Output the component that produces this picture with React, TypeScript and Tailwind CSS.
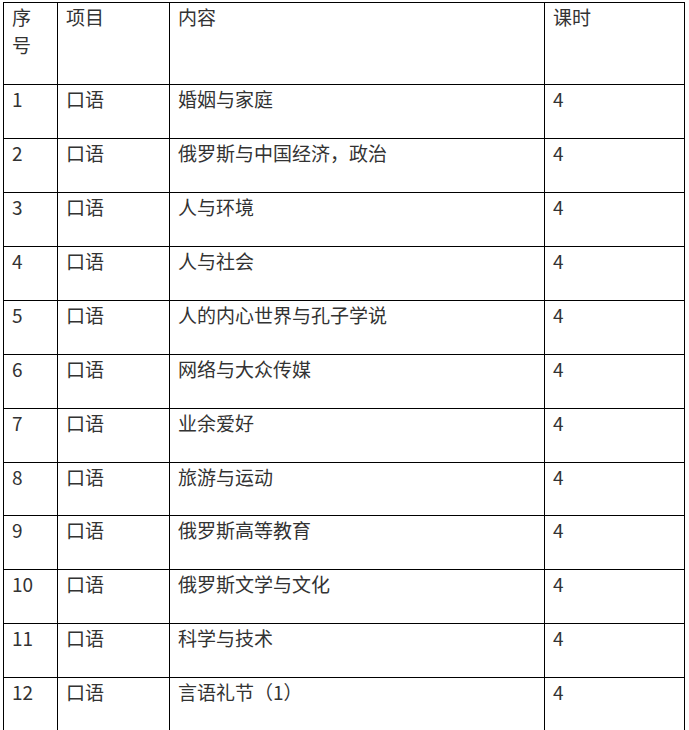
const rows: [string, string][] = [
  ['1', '婚姻与家庭'],
  ['2', '俄罗斯与中国经济，政治'],
  ['3', '人与环境'],
  ['4', '人与社会'],
  ['5', '人的内心世界与孔子学说'],
  ['6', '网络与大众传媒'],
  ['7', '业余爱好'],
  ['8', '旅游与运动'],
  ['9', '俄罗斯高等教育'],
  ['10', '俄罗斯文学与文化'],
  ['11', '科学与技术'],
  ['12', '言语礼节（1）'],
]

const cell = 'border-r border-b border-black px-[8px] pt-0'

export default function App() {
  return (
    <div className="bg-white min-h-[730px] pt-[2px] pl-[3px] overflow-hidden">
      <div
        className="grid grid-cols-[54px_112px_375px_140px] w-[682px] border-l border-t border-black text-[19px] leading-[28px] text-[#333333]"
        style={{ fontFamily: '"Noto Sans CJK SC", "Noto Sans", sans-serif' }}
      >
        <div className={`${cell} h-[82px]`}>序号</div>
        <div className={`${cell} h-[82px]`}>项目</div>
        <div className={`${cell} h-[82px]`}>内容</div>
        <div className={`${cell} h-[82px]`}>课时</div>
        {rows.map(([n, c], i) => {
          const h = i === 7 ? 'h-[53px]' : 'h-[54px]'
          return [
            <div key={n + 'a'} className={`${cell} ${h}`}>{n}</div>,
            <div key={n + 'b'} className={`${cell} ${h}`}>口语</div>,
            <div key={n + 'c'} className={`${cell} ${h}`}>{c}</div>,
            <div key={n + 'd'} className={`${cell} ${h}`}>4</div>,
          ]
        })}
      </div>
    </div>
  )
}
